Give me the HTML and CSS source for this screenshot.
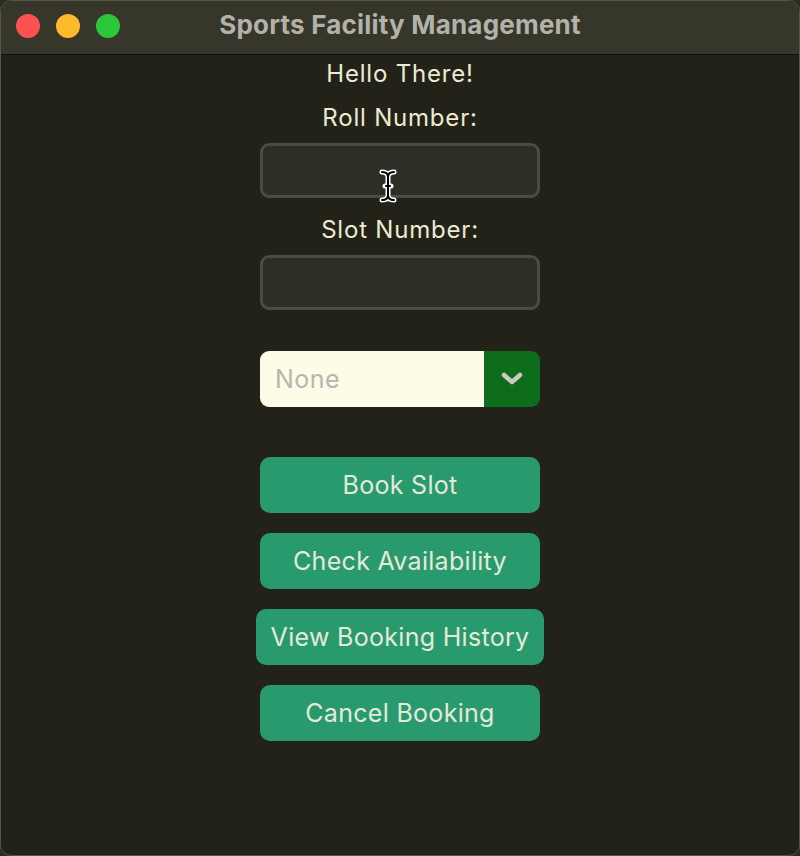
FILE: index.html
```html
<!DOCTYPE html>
<html>
<head>
<meta charset="utf-8">
<link rel="stylesheet" href="styles.css">
</head>
<body>
<div class="window">
  <div class="titlebar">
    <div class="lights">
      <span class="light red"></span>
      <span class="light yellow"></span>
      <span class="light green"></span>
    </div>
    <div class="title">Sports Facility Management</div>
  </div>
  <div class="content">
    <div class="label hello">Hello There!</div>
    <div class="label roll">Roll Number:</div>
    <div class="entry entry-roll">
      <svg class="ibeam" width="18" height="34" viewBox="0 0 18 34">
        <path d="M3 3 C7 3 9 5 9 8 C9 5 11 3 15 3 M9 8 L9 26 M3 31 C7 31 9 29 9 26 C9 29 11 31 15 31 M6 17 L12 17" fill="none" stroke="#fff" stroke-width="5" stroke-linecap="round"/>
        <path d="M3 3 C7 3 9 5 9 8 C9 5 11 3 15 3 M9 8 L9 26 M3 31 C7 31 9 29 9 26 C9 29 11 31 15 31 M7 17 L11 17" fill="none" stroke="#000" stroke-width="2" stroke-linecap="round"/>
      </svg>
    </div>
    <div class="label slot">Slot Number:</div>
    <div class="entry"></div>
    <div class="dropdown">
      <div class="dd-value">None</div>
      <div class="dd-btn">
        <svg width="22" height="14" viewBox="0 0 22 14">
          <path d="M3 3 L11 10 L19 3" fill="none" stroke="#c8ccc4" stroke-width="4.5" stroke-linecap="round" stroke-linejoin="round"/>
        </svg>
      </div>
    </div>
    <div class="buttons">
      <div class="btn">Book Slot</div>
      <div class="btn">Check Availability</div>
      <div class="btn wide">View Booking History</div>
      <div class="btn">Cancel Booking</div>
    </div>
  </div>
</div>
</body>
</html>
```

FILE: styles.css
```css
html, body {
  margin: 0;
  padding: 0;
  background: #2a2a22;
}
body {
  width: 800px;
  height: 856px;
  overflow: hidden;
  font-family: Inter, "Noto Sans", "Liberation Sans", sans-serif;
}
.window {
  box-sizing: border-box;
  width: 800px;
  height: 856px;
  border: 1px solid #55554a;
  border-radius: 11px;
  overflow: hidden;
  background: #222219;
  display: flex;
  flex-direction: column;
}
.titlebar {
  height: 53px;
  flex: none;
  background: #36362b;
  border-bottom: 1px solid #101010;
  position: relative;
  display: flex;
  align-items: center;
  justify-content: center;
}
.lights {
  position: absolute;
  left: 15px;
  top: 13px;
  display: flex;
  gap: 16px;
}
.light {
  width: 24px;
  height: 24px;
  border-radius: 50%;
  display: block;
}
.red { background: #fd5350; }
.yellow { background: #fdbb2c; }
.green { background: #2ac73a; }
.title {
  color: #b2b2a8;
  font-weight: 700;
  font-size: 26px;
  line-height: 30px;
  letter-spacing: 0.2px;
  margin-top: -6px;
}
.content {
  display: flex;
  flex-direction: column;
  align-items: center;
}
.label {
  color: #ecebd2;
  font-size: 24px;
  line-height: 24px;
  letter-spacing: 0.8px;
}
.hello { margin-top: 7px; }
.roll { margin-top: 20px; }
.slot { margin-top: 20px; }
.entry {
  box-sizing: border-box;
  width: 280px;
  height: 55px;
  margin-top: 13px;
  border: 3px solid #4c4c46;
  border-radius: 9px;
  background: #2e2e27;
  position: relative;
}
.ibeam {
  position: absolute;
  left: 116px;
  top: 23px;
}
.dropdown {
  width: 280px;
  height: 56px;
  margin-top: 41px;
  border-radius: 9px;
  overflow: hidden;
  display: flex;
}
.dd-value {
  flex: 1;
  background: #fdfce6;
  color: #b6b6b0;
  font-size: 25px;
  letter-spacing: 0.5px;
  display: flex;
  align-items: center;
  padding-left: 15px;
}
.dd-btn {
  width: 56px;
  background: #0e6d1c;
  display: flex;
  align-items: center;
  justify-content: center;
}
.buttons {
  margin-top: 50px;
  display: flex;
  flex-direction: column;
  align-items: center;
  gap: 20px;
}
.btn {
  box-sizing: border-box;
  width: 280px;
  height: 56px;
  border-radius: 10px;
  background: #299a6e;
  color: #e4ead8;
  font-size: 25px;
  letter-spacing: 0.3px;
  display: flex;
  align-items: center;
  justify-content: center;
}
.btn.wide {
  width: 288px;
}
```
